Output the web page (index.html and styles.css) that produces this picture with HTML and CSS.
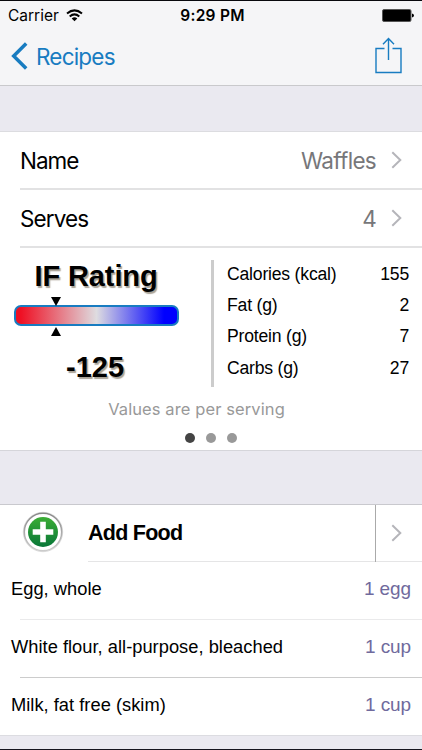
FILE: index.html
```html
<!DOCTYPE html>
<html lang="en">
<head>
<meta charset="utf-8">
<title>Recipe</title>
<link rel="stylesheet" href="styles.css">
</head>
<body>
<header class="top">
  <div class="status">
    <div class="carrier"><span>Carrier</span>
      <svg width="17" height="13" viewBox="0 0 17 13" fill="none" stroke="#000" stroke-width="2"><path d="M1 4.600Q8.500-1.800 16 4.600M3.700 7.500Q8.500 3.300 13.300 7.500"/><path d="M5.700 9.500Q8.500 7.200 11.300 9.500L8.500 12.200Z" fill="#000" stroke="none"/></svg>
    </div>
    <span class="time">9:29 PM</span>
    <svg class="battery" width="33" height="13" viewBox="0 0 33 13"><rect x=".5" y=".5" width="28.500" height="12" rx="1.500" stroke="#555"/><path d="M30 4.500Q32 5 32 6.500T30 8.500Z"/></svg>
  </div>
  <nav class="nav">
    <div class="back"><svg width="17" height="28" viewBox="0 0 17 28" fill="none" stroke="#187cc1" stroke-width="3.500"><path d="M15.200 1.500L2.700 14L15.200 26.500"/></svg><span>Recipes</span></div>
    <svg class="share" width="27" height="37" viewBox="0 0 27 37" fill="none" stroke="#187cc1" stroke-width="1.400"><path d="M9.500 11.500H1V35.500H26V11.500H17.500M13.500 23V2M8 7.200L13.500 1.500L19 7.200"/></svg>
  </nav>
</header>
<main>
  <section class="details">
    <div class="row"><span class="name">Name</span><span class="value">Waffles</span><svg class="chevron" viewBox="0 0 11 18"><path d="M1.300 1.300L9.300 9L1.300 16.700"/></svg></div>
    <div class="row"><span class="serves">Serves</span><span class="value">4</span><svg class="chevron" viewBox="0 0 11 18"><path d="M1.300 1.300L9.300 9L1.300 16.700"/></svg></div>
    <div class="panel">
      <div class="rating">
        <h2>IF Rating</h2>
        <svg class="pointer" viewBox="0 0 10 9"><path d="M0 0H10L5 9Z"/></svg>
        <div class="gauge"></div>
        <svg class="pointer" viewBox="0 0 10 9"><path d="M0 9H10L5 0Z"/></svg>
        <div class="score">-125</div>
      </div>
      <div class="facts">
        <div><span>Calories (kcal)</span><span>155</span></div>
        <div><span>Fat (g)</span><span>2</span></div>
        <div><span>Protein (g)</span><span>7</span></div>
        <div><span>Carbs (g)</span><span>27</span></div>
      </div>
    </div>
    <p class="note">Values are per serving</p>
    <div class="dots"><i class="on"></i><i></i><i></i></div>
  </section>
  <section class="foods">
    <div class="add">
      <svg class="plus" width="42" height="42" viewBox="0 0 42 42"><defs><linearGradient id="green" x2="0" y2="1"><stop stop-color="#3bad35"/><stop offset="1" stop-color="#087638"/></linearGradient><linearGradient id="ring" x2="0" y2="1"><stop stop-color="#888"/><stop offset="1" stop-color="#ccc"/></linearGradient></defs><circle cx="21" cy="21" r="19.700" fill="#fff" stroke="#ddd"/><circle cx="21" cy="21" r="18.700" fill="#fff" stroke="url(#ring)" stroke-width="1.500"/><circle cx="21" cy="21" r="15" fill="url(#green)"/><path d="M18.200 10.700H23.800V18.200H31.300V23.800H23.800V31.300H18.200V23.800H10.700V18.200H18.200Z" fill="#fff"/></svg>
      <strong>Add Food</strong>
      <div class="open"><svg class="chevron" viewBox="0 0 11 18"><path d="M1.300 1.300L9.300 9L1.300 16.700"/></svg></div>
    </div>
    <div class="food"><span>Egg, whole</span><span>1 egg</span></div>
    <div class="food strong-line"><span>White flour, all-purpose, bleached</span><span>1 cup</span></div>
    <div class="food"><span>Milk, fat free (skim)</span><span>1 cup</span></div>
  </section>
</main>
</body>
</html>
```
FILE: styles.css
```css
* { box-sizing: border-box; }
body { margin: 0; height: 750px; overflow: hidden; background: #eae9f0; border-top: 1px solid #08080d; border-bottom: 1px solid #15151e; font-family: "Liberation Sans", sans-serif; color: #000; }
svg { display: block; flex: none; }
.top { height: 85px; background: #f5f5f7; border-bottom: 1px solid #c9c9cc; font-family: Inter, sans-serif; }
.status { height: 28px; padding: 0 7px 0 8px; display: grid; grid-template-columns: 1fr auto 1fr; align-items: center; font-size: 15.5px; }
.carrier { display: flex; gap: 7px; align-items: center; letter-spacing: 0; }
.time { font-weight: 600; letter-spacing: .25px; padding-left: 2px; }
.battery { justify-self: end; }
.nav { height: 54px; padding: 0 20px 0 11px; display: flex; justify-content: space-between; align-items: center; }
.share { margin-top: -1px; }
.back { display: flex; align-items: center; gap: 8px; color: #187cc1; font-size: 22.5px; letter-spacing: -.8px; }
.details { margin-top: 45px; height: 320px; background: #fff; border-top: 1px solid #dcdce0; border-bottom: 1px solid #d5d5da; }
.row { height: 58px; margin-left: 20px; padding-right: 20px; display: flex; align-items: center; border-bottom: 2px solid #e2e2e3; font: 22.5px Inter, sans-serif; letter-spacing: -.7px; }
.name { letter-spacing: -1px; }
.serves { letter-spacing: -.9px; }
.value { margin-left: auto; margin-right: 15px; color: #77777a; }
.chevron { width: 11px; height: 18px; fill: none; stroke: #b5b5ba; stroke-width: 2; }
.panel { height: 138px; display: flex; padding-top: 12px; }
.rating { width: 211px; padding-left: 14px; }
.rating h2, .score { width: 164px; margin: 0; text-align: center; font-size: 29px; line-height: 33px; font-weight: bold; text-shadow: 1.5px 1.5px 1px #aaa397; }
.rating h2 { letter-spacing: -.1px; }
.pointer { width: 10px; height: 9px; margin-left: 37px; }
.rating h2 + .pointer { margin-top: 4px; }
.gauge { width: 165px; height: 21px; margin-top: -1px; border: 2px solid #187cc1; border-radius: 7px; background: linear-gradient(90deg, #ef1024 3%, #dedce0 50%, #00f 92%); }
.gauge + .pointer { margin-top: 1px; }
.score { margin: 15px 0 0 -1px; }
.facts { width: 211px; border-left: 3px solid #ccc; height: 127px; padding: 0 13px 0 13px; font-size: 17.6px; letter-spacing: -.2px; }
.facts div { display: flex; justify-content: space-between; height: 31.2px; line-height: 29px; }
.note { margin: 12px 0 0; text-align: center; padding-right: 29px; color: #999; font: 16.5px/22px Inter, sans-serif; letter-spacing: .1px; }
.dots { display: flex; gap: 11px; margin: 13px 0 0 185px; }
.dots i { width: 10px; height: 10px; border-radius: 50%; background: #999; }
.dots .on { background: #444; }
.foods { margin-top: 53px; height: 232px; background: #fff; border-top: 1px solid #c9c9ce; border-bottom: 1px solid #dcdce1; }
.add { height: 57px; display: flex; align-items: center; background: linear-gradient(#e5e5e6,#e5e5e6) 88px 100% / 334px 1px no-repeat; }
.plus { margin: -4px 24px 0 22px; }
.add strong { font-size: 21.5px; letter-spacing: -.75px; }
.open { margin-left: auto; height: 57px; width: 47px; padding: 0 0 2px 15px; border-left: 1px solid #aaa; display: flex; align-items: center; }
.food { height: 58px; padding: 0 11px 5px; display: flex; justify-content: space-between; align-items: center; font-size: 18.3px; letter-spacing: .02px; background: linear-gradient(#eaeaeb,#eaeaeb) 20px 100% / 402px 1px no-repeat; }
.food:last-child { height: 57px; padding-bottom: 4px; background: none; }
.food.strong-line { background-image: linear-gradient(#ccc,#ccc); }
.food span:last-child { color: #706a9d; font-size: 19px; letter-spacing: -.1px; }
```
